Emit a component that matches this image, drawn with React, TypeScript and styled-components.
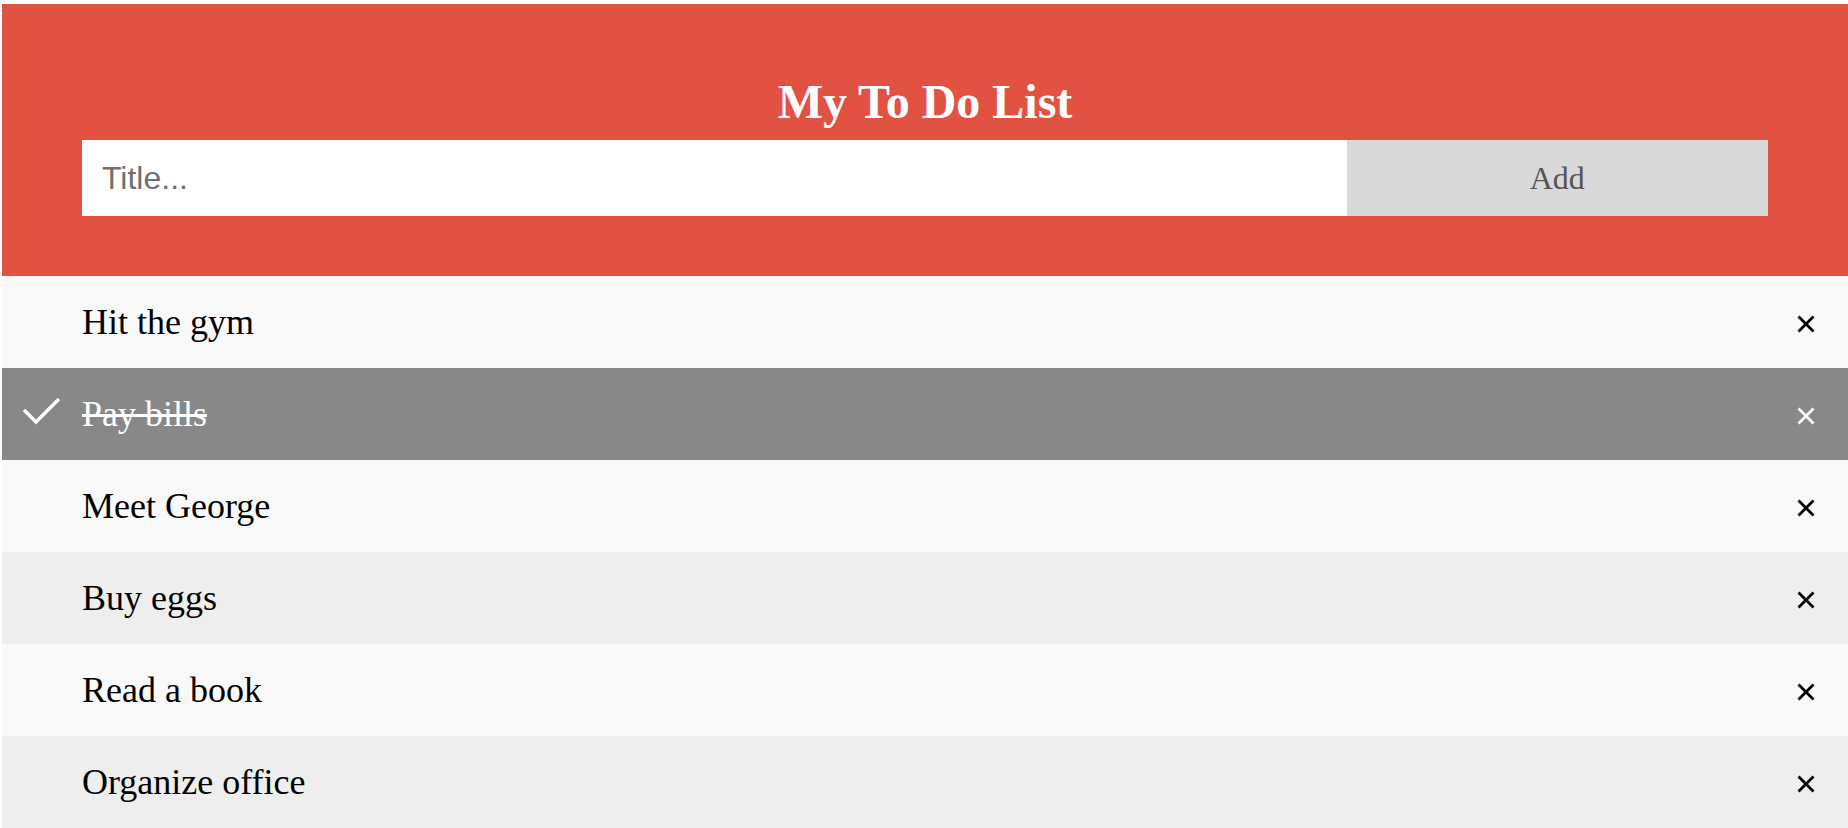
import { useState } from 'react'
import styled, { createGlobalStyle } from 'styled-components'

const GlobalStyle = createGlobalStyle`
  * {
    box-sizing: border-box;
  }
  html, body {
    background: #fff;
  }
  body {
    margin: 4px 0 0 2px;
    font-family: "Liberation Serif", "Times New Roman", serif;
  }
`

const Header = styled.div`
  background: #e25243;
  padding: 60px 80px;
  color: #fff;
  text-align: center;
`

const Title = styled.h2`
  margin: 10px;
  font-size: 48px;
  line-height: 56px;
  font-weight: 700;
`

const Form = styled.div`
  display: flex;
`

const TitleInput = styled.input`
  width: 75%;
  height: 76px;
  margin: 0;
  padding: 20px;
  border: none;
  border-radius: 0;
  outline: none;
  font-family: "Liberation Sans", Arial, sans-serif;
  font-size: 32px;
  line-height: 36px;
  color: #000;
  background: #fff;
  &::placeholder {
    color: #707070;
  }
`

const AddButton = styled.span`
  width: 25%;
  height: 76px;
  padding: 20px;
  background: #d9d9d9;
  color: #555;
  font-size: 32px;
  line-height: 36px;
  text-align: center;
  cursor: pointer;
  &:hover {
    background: #bbb;
  }
`

const List = styled.ul`
  margin: 0;
  padding: 0;
  list-style: none;
`

const Item = styled.li<{ $checked: boolean; $odd: boolean }>`
  display: flex;
  align-items: center;
  padding: 24px 0;
  font-size: 36px;
  line-height: 44px;
  cursor: pointer;
  background: ${(p) => (p.$checked ? '#888' : p.$odd ? '#f9f9f9' : '#eee')};
  color: ${(p) => (p.$checked ? '#fff' : '#000')};
`

const CheckSlot = styled.span`
  flex: 0 0 80px;
  height: 44px;
  display: flex;
  align-items: center;
`

const Label = styled.span<{ $checked: boolean }>`
  flex: 1;
  text-decoration: ${(p) => (p.$checked ? 'line-through' : 'none')};
`

const Close = styled.span`
  display: flex;
  align-items: center;
  height: 44px;
  padding: 4px 33px 0 33px;
  &:hover {
    background: #f44336;
    color: #fff;
  }
`

type Todo = { id: number; title: string; done: boolean }

const initial: Todo[] = [
  { id: 1, title: 'Hit the gym', done: false },
  { id: 2, title: 'Pay bills', done: true },
  { id: 3, title: 'Meet George', done: false },
  { id: 4, title: 'Buy eggs', done: false },
  { id: 5, title: 'Read a book', done: false },
  { id: 6, title: 'Organize office', done: false },
]

const Check = () => (
  <svg width="80" height="44" viewBox="0 0 80 44">
    <polyline points="22,18 34,30 57,7" fill="none" stroke="#fff" strokeWidth="3.5" />
  </svg>
)

const Cross = () => (
  <svg width="18" height="18" viewBox="0 0 18 18">
    <path d="M1.5 1.5 L16.5 16.5 M16.5 1.5 L1.5 16.5" stroke="currentColor" strokeWidth="2.8" />
  </svg>
)

export default function App() {
  const [todos, setTodos] = useState<Todo[]>(initial)
  const [text, setText] = useState('')

  const add = () => {
    if (!text.trim()) return
    setTodos([...todos, { id: Date.now(), title: text, done: false }])
    setText('')
  }

  return (
    <>
      <GlobalStyle />
      <Header>
        <Title>My To Do List</Title>
        <Form>
          <TitleInput
            placeholder="Title..."
            value={text}
            onChange={(e) => setText(e.target.value)}
          />
          <AddButton onClick={add}>Add</AddButton>
        </Form>
      </Header>
      <List>
        {todos.map((t, i) => (
          <Item
            key={t.id}
            $checked={t.done}
            $odd={i % 2 === 0}
            onClick={() => setTodos(todos.map((x) => (x.id === t.id ? { ...x, done: !x.done } : x)))}
          >
            <CheckSlot>{t.done && <Check />}</CheckSlot>
            <Label $checked={t.done}>{t.title}</Label>
            <Close
              title="Remove"
              onClick={(e) => {
                e.stopPropagation()
                setTodos(todos.filter((x) => x.id !== t.id))
              }}
            >
              <Cross />
            </Close>
          </Item>
        ))}
      </List>
    </>
  )
}
